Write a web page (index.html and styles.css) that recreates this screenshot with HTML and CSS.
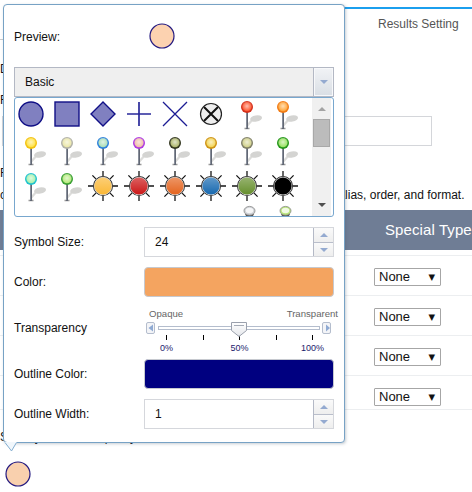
FILE: index.html
```html
<!DOCTYPE html>
<html lang="en">
<head>
<meta charset="utf-8">
<title>Results Setting</title>
<link rel="stylesheet" href="styles.css">
</head>
<body>
<svg class="defs" aria-hidden="true">
  <defs>
    <radialGradient id="glow" cx=".5" cy=".42" r=".5"><stop offset="0" stop-color="#fff" stop-opacity=".65"/><stop offset=".55" stop-color="#fff" stop-opacity=".3"/><stop offset="1" stop-color="#fff" stop-opacity="0"/></radialGradient>
    <linearGradient id="sheen" x1="0" y1="0" x2="0" y2="1"><stop offset="0" stop-color="#fff" stop-opacity=".32"/><stop offset="1" stop-color="#fff" stop-opacity="0"/></linearGradient>
    <linearGradient id="thumb" x1="0" y1="0" x2="0" y2="1"><stop offset="0" stop-color="#fff"/><stop offset="1" stop-color="#e4e6ea"/></linearGradient>
  </defs>
  <symbol id="pin" viewBox="0 0 36 36">
    <path d="M18 30L24 23" stroke="#dcdcda" stroke-width="2.2"/>
    <ellipse cx="27" cy="22.5" rx="6" ry="3.1" transform="rotate(-10 27 22)" fill="#d4d4d2"/>
    <path d="M15.5 32.5h5" stroke="#999" stroke-width="1.4"/>
    <path d="M18 16v17" stroke="#626875" stroke-width="2"/>
    <path d="M17.5 17v15" stroke="#9a9faa" stroke-width=".7"/>
    <circle cx="18" cy="11" r="6" fill="currentColor"/>
    <circle cx="18" cy="10.8" r="4.5"/>
    <circle cx="18" cy="11" r="5.5" fill="url(#glow)"/>
  </symbol>
  <symbol id="sun" viewBox="0 0 36 36">
    <path d="M18 3v5M18 28v5M3 18h5M28 18h5M7.4 7.4l3.5 3.5M25.1 25.1l3.5 3.5M7.4 28.6l3.5-3.5M25.1 10.9l3.5-3.5" stroke="#161616" stroke-width="1.3"/>
    <circle cx="18" cy="18" r="10" fill="#1c1c1c"/>
    <circle cx="18" cy="18" r="9.2" class="rim"/>
    <circle cx="18" cy="18" r="8.6" fill="currentColor"/>
    <circle cx="18" cy="18" r="8.6" class="sheen" fill="url(#sheen)"/>
  </symbol>
  <symbol id="bulb" viewBox="0 0 36 36">
    <path d="M16 10l2 4h5l2-4Z" fill="#555"/>
    <ellipse cx="20.5" cy="6.8" rx="5.5" ry="4.4" fill="currentColor" stroke="#888" stroke-width=".8"/>
    <ellipse cx="20.5" cy="6.5" rx="3.8" ry="2.8" fill="#fff" opacity=".8"/>
  </symbol>
</svg>

<main class="page">
  <div class="tabs"><span class="tab">Results Setting</span></div>
  <p class="line line-data">Data</p>
  <p class="line line-field">Field</p>
  <div class="field"></div>
  <p class="line line-result">Result</p>
  <p class="line line-hint"><span>configure</span><span>alias, order, and format.</span></p>
  <div class="thead">Special Type</div>
  <div class="trow"><span class="select">None<i>▼</i></span></div>
  <div class="trow"><span class="select">None<i>▼</i></span></div>
  <div class="trow"><span class="select">None<i>▼</i></span></div>
  <div class="trow last"><span class="select">None<i>▼</i></span></div>
  <p class="line line-set">Set Layer Marker Opacity</p>
  <svg class="marker" width="26" height="26"><circle cx="13" cy="13" r="12" fill="#f9d0ae" stroke="#241a80" stroke-width="1.2"/></svg>
</main>

<section class="popup">
  <div class="row preview"><span class="label">Preview:</span><svg width="26" height="26"><circle cx="13" cy="13" r="12" fill="#fcd2b0" stroke="#241a80" stroke-width="1.2"/></svg></div>
  <div class="combo"><span>Basic</span><span class="combo-btn"><i class="tri down"></i></span></div>
  <div class="list">
    <div class="icons">
      <svg viewBox="0 0 36 36"><circle cx="18" cy="18" r="12" fill="#8080c0" stroke="#100f86" stroke-width="1.4"/></svg>
      <svg viewBox="0 0 36 36"><rect x="6" y="6" width="24" height="24" fill="#8080c0" stroke="#100f86" stroke-width="1.4"/></svg>
      <svg viewBox="0 0 36 36"><path d="M18 6l12 12-12 12L6 18Z" fill="#8080c0" stroke="#100f86" stroke-width="1.4"/></svg>
      <svg viewBox="0 0 36 36"><path d="M18 6v24M6 18h24" stroke="#29299a" stroke-width="1.7"/></svg>
      <svg viewBox="0 0 36 36"><path d="M6 6l24 24M6 30L30 6" stroke="#1c1c94" stroke-width="1.3"/></svg>
      <svg viewBox="0 0 36 36"><circle cx="18" cy="18" r="10.5" fill="#eee" stroke="#222" stroke-width="1.2"/><path d="M11 11l14 14M11 25l14-14" stroke="#111" stroke-width="2"/></svg>
      <svg class="red"><use href="#pin"/></svg>
      <svg class="orange"><use href="#pin"/></svg>

      <svg class="yellow"><use href="#pin"/></svg>
      <svg class="silver"><use href="#pin"/></svg>
      <svg class="blue"><use href="#pin"/></svg>
      <svg class="purple"><use href="#pin"/></svg>
      <svg class="dark"><use href="#pin"/></svg>
      <svg class="gold"><use href="#pin"/></svg>
      <svg class="gray"><use href="#pin"/></svg>
      <svg class="green"><use href="#pin"/></svg>

      <svg class="cyan"><use href="#pin"/></svg>
      <svg class="leaf"><use href="#pin"/></svg>
      <svg class="s-yellow"><use href="#sun"/></svg>
      <svg class="s-red"><use href="#sun"/></svg>
      <svg class="s-orange"><use href="#sun"/></svg>
      <svg class="s-blue"><use href="#sun"/></svg>
      <svg class="s-green"><use href="#sun"/></svg>
      <svg class="s-black"><use href="#sun"/></svg>

      <svg></svg><svg></svg><svg></svg><svg></svg><svg></svg><svg></svg>
      <svg class="b-gray"><use href="#bulb"/></svg>
      <svg class="b-lime"><use href="#bulb"/></svg>
    </div>
    <div class="scroll"><i class="tri up"></i><div class="grip"></div><i class="tri down"></i></div>
  </div>
  <div class="row size"><span class="label">Symbol Size:</span><div class="spin"><span>24</span><div class="btns"><b><i class="tri up"></i></b><b><i class="tri down"></i></b></div></div></div>
  <div class="row"><span class="label">Color:</span><div class="swatch sandy"></div></div>
  <div class="row transparency"><span class="label">Transparency</span>
    <div class="slider">
      <div class="ends"><span>Opaque</span><span>Transparent</span></div>
      <svg class="track" width="190" height="21">
        <g fill="#f3f4f7" stroke="#b4bdcd"><rect x="2.5" y="1.5" width="8" height="11" rx="1.5"/><rect x="178.5" y="1.5" width="8" height="11" rx="1.5"/><rect x="14.5" y="5.5" width="161" height="3" fill="#fff"/></g>
        <path d="M9 3.5v7L4.500 7ZM182 3.5v7l4-3.5Z" fill="#8faad3"/>
        <path d="M22.5 14v5M59.5 14v5M95.500 14v5M132.5 14v5M168.5 14v5" stroke="#000"/>
        <path d="M87.5 1.5h15v8L95 15.5l-7.5-6Z" fill="url(#thumb)" stroke="#9aa0ac"/>
        <path d="M90 4.5h10" stroke="#a5abb6"/>
      </svg>
      <div class="marks"><span>0%</span><span>50%</span><span>100%</span></div>
    </div>
  </div>
  <div class="row"><span class="label">Outline Color:</span><div class="swatch navy"></div></div>
  <div class="row"><span class="label">Outline Width:</span><div class="spin"><span>1</span><div class="btns"><b><i class="tri up"></i></b><b><i class="tri down"></i></b></div></div></div>
  <svg class="tail" width="14" height="10"><path d="M0 0L7.500 9L13 0Z" fill="#f1f7fc"/><path d="M1 .5L7.500 9L12.500 .5" fill="none" stroke="#83adcf"/></svg>
</section>
</body>
</html>
```

FILE: styles.css
```css
* { box-sizing: border-box; }
body {
  margin: 0;
  width: 472px;
  height: 492px;
  overflow: hidden;
  position: relative;
  background: #fff;
  color: #111;
  font: 12px/16px "Liberation Sans", Arial, sans-serif;
}
.defs { position: absolute; width: 0; height: 0; }
i { font-style: normal; }

/* page behind the popup */
.page { display: flex; flex-direction: column; }
.tabs {
  height: 40px;
  display: flex;
  justify-content: flex-end;
  background: linear-gradient(#ccc, #ccc) 0 39px / 300px 1px no-repeat;
}
.tab {
  width: 172px;
  height: 33px;
  margin-top: 7px;
  padding: 7px 0 0 78px;
  border-top: 2px solid #1b9fee;
  color: #555;
}
.line { margin: 0; height: 16px; white-space: nowrap; }
.line-data { margin-top: 21px; }
.line-field { margin-top: 15px; }
.field { width: 430px; height: 30px; margin: 8px 0 0 2px; border: 1px solid #d4d6da; }
.line-result { margin-top: 19px; }
.line-hint { margin-top: 6px; width: 464.5px; display: flex; justify-content: space-between; }
.thead {
  height: 40px;
  margin-top: 7px;
  padding-left: 385px;
  background: #6f7d95;
  color: #fff;
  font-size: 15px;
  letter-spacing: .1px;
  line-height: 40px;
  white-space: nowrap;
}
.trow { height: 40px; padding: 12px 0 0 374px; border-top: 1px solid #eceef0; }
.thead + .trow { margin-top: 5px; }
.trow.last { height: 35px; border-bottom: 1px solid #eceef0; }
.select {
  display: flex;
  justify-content: space-between;
  width: 67px;
  height: 18px;
  padding: 0 5px 0 4px;
  border: 1px solid #a6a6a6;
  border-radius: 1px;
  background: #fff;
  font-size: 13px;
  line-height: 16px;
}
.select i { font: 8.5px/16px "DejaVu Sans", sans-serif; }
.line-set { margin-top: 19px; }
.marker { display: block; margin: 16px 0 0 5px; }

/* popup */
.popup {
  position: absolute;
  left: 3px;
  top: 4px;
  width: 342px;
  height: 439px;
  padding: 0 10px;
  border: 1px solid #77a2c5;
  border-radius: 4px;
  background: #fff;
  box-shadow: 1px 1px 3px rgba(70, 90, 110, .3);
}
.tail { position: absolute; left: 0; top: 437px; }
.row { display: flex; align-items: center; height: 40px; }
.label { width: 130px; flex: none; }
.preview { height: 62px; }
.preview .label { padding-top: 2px; }
.preview svg { margin-left: 5px; }
.combo {
  display: flex;
  justify-content: space-between;
  align-items: center;
  width: 320px;
  height: 30px;
  padding-left: 10px;
  border: 1px solid #b3b8c4;
  background: #efefef;
}
.combo-btn {
  display: flex;
  align-items: center;
  justify-content: center;
  width: 19px;
  height: 28px;
  border: 1px solid #f7f8fa;
  box-shadow: -1px 0 #b3b8c4;
  background: linear-gradient(#f0f2f5, #dadfe5);
}
.tri { display: block; width: 0; height: 0; border: 4px solid transparent; color: #94aad0; }
.tri.down { border-top-color: currentColor; border-bottom: 0; }
.tri.up { border-bottom-color: currentColor; border-top: 0; }
.list {
  display: flex;
  width: 320px;
  height: 120px;
  border: 1px solid #78a7ce;
  border-radius: 3px;
  overflow: hidden;
}
.icons {
  display: grid;
  grid-template-columns: repeat(8, 36px);
  grid-auto-rows: 36px;
  width: 297px;
  height: 120px;
  margin-left: -2px;
  margin-top: -2px;
  overflow: hidden;
  flex: none;
}
.icons svg { display: block; width: 36px; height: 36px; }
.scroll {
  display: flex;
  flex-direction: column;
  align-items: center;
  flex: 1;
  margin: 0 2px;
  padding: 9px 0;
  background: #f0f0f0;
}
.scroll .up { color: #a3a3a3; }
.scroll .down { color: #505050; margin-top: auto; }
.grip { width: 17px; height: 28px; margin-top: 8px; background: #bcbcbc; border: 1px solid #a8a8a8; }

/* pins: color is the rim, fill the bright centre */
.red { color: #d5301b; fill: #ff4a20; }
.orange { color: #f27b14; fill: #ffa02b; }
.yellow { color: #f3c20f; fill: #ffe038; }
.silver { color: #b2b2a8; fill: #e9e5a0; }
.blue { color: #2e82dc; fill: #a5dcb0; }
.purple { color: #ae3ae2; fill: #f0b8a0; }
.dark { color: #343820; fill: #a7b060; }
.gold { color: #cf9414; fill: #f2d24a; }
.gray { color: #808068; fill: #cdcd80; }
.green { color: #24961a; fill: #90e055; }
.cyan { color: #1fc2ce; fill: #a0f0a5; }
.leaf { color: #3aa034; fill: #aee870; }

.rim { fill: #d8d8d8; }
.s-yellow { color: #fbb836; }
.s-red { color: #cb1717; }
.s-orange { color: #e5641e; }
.s-blue { color: #1769b0; }
.s-green { color: #668f2d; }
.s-black { color: #000; --sheen: 0; }
.sheen { opacity: var(--sheen, 1); }
.b-gray { color: #cfd2d6; }
.b-lime { color: #b9e57b; }

.size { margin-top: 5px; }
.spin {
  display: flex;
  justify-content: space-between;
  align-items: center;
  width: 190px;
  height: 30px;
  padding-left: 10px;
  border: 1px solid #d5d7dc;
}
.btns { width: 20px; height: 28px; border-left: 1px solid #b4b9c6; }
.btns b {
  display: flex;
  height: 14px;
  align-items: center;
  justify-content: center;
  background: linear-gradient(#fafafa, #eee);
}
.btns b + b { border-top: 1px solid #b9becb; }
.swatch { width: 190px; height: 30px; border: 1px solid #c6c9cf; border-radius: 4px; }
.sandy { background: #f4a460; }
.navy { background: #000080; }
.transparency { height: 52px; }
.slider { width: 196px; height: 52px; padding-top: 6px; flex: none; }
.ends {
  display: flex;
  justify-content: space-between;
  width: 194px;
  height: 12px;
  padding-left: 5px;
  font-size: 9.6px;
  line-height: 12px;
  color: #666;
}
.track { display: block; margin-top: 1px; }
.marks {
  display: grid;
  grid-template-columns: 73px 73px 73px;
  margin-left: -14px;
  text-align: center;
  font-size: 9px;
  line-height: 12px;
  color: #1b1b6c;
}
```
